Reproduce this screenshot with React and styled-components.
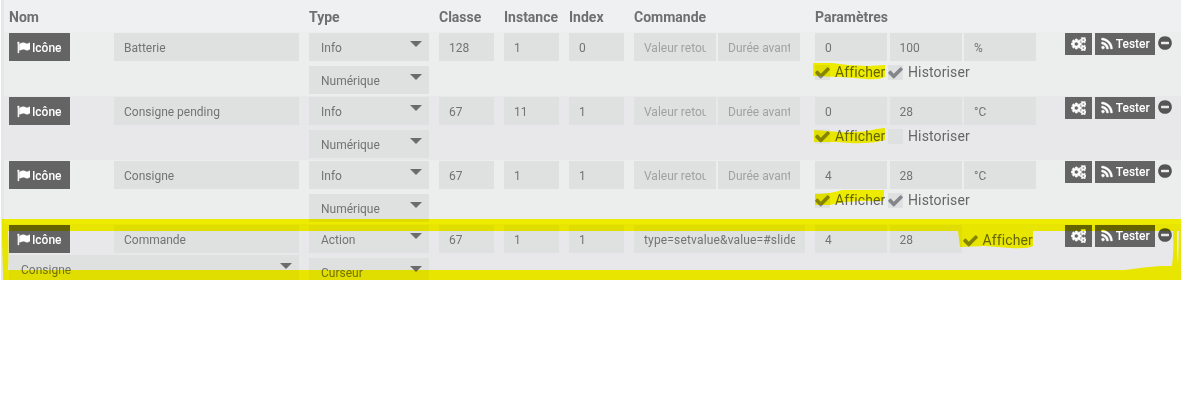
import React from "react";
import styled, { createGlobalStyle } from "styled-components";

const GlobalStyle = createGlobalStyle`
  * { box-sizing: border-box; }
  body { margin: 0; background: #fff; font-family: Roboto, "Liberation Sans", sans-serif; }
`;

const Panel = styled.main`
  position: relative;
  width: 1180px;
  height: 280px;
  margin-left: 1px;
  padding-left: 3px;
  overflow: hidden;
  background: linear-gradient(to right, #e7e7ea 3px, #eff0f2 3px);
`;

const Columns = styled.div`
  display: grid;
  grid-template-columns: 290px 120px 55px 55px 55px 171px 240px 1fr;
  column-gap: 10px;
  padding-left: 5px;
`;

const Head = styled(Columns)`
  height: 32px;
  padding-top: 8px;
  font-size: 14px;
  line-height: 18px;
  font-weight: 700;
  color: #6f6f6f;
`;

const Row = styled(Columns)`
  height: 64px;
  padding-top: 1px;
  align-items: start;
  background: ${(p) => (p.$alt ? "#e8e8ea" : "#eceeed")};
`;

const Stack = styled.div`
  display: flex;
  flex-direction: column;
  gap: ${(p) => p.$gap}px;
`;

const Line = styled.div`
  display: flex;
  align-items: flex-start;
  justify-content: ${(p) => (p.$spread ? "space-between" : "flex-start")};
  gap: ${(p) => p.$gap || 0}px;
`;

const Field = styled.div`
  flex: none;
  width: ${(p) => p.$w}px;
  height: 28px;
  padding: 1px 10px 0;
  font-size: 12px;
  line-height: 28px;
  letter-spacing: ${(p) => (p.$wide ? "0.16px" : "normal")};
  color: ${(p) => (p.$hint ? "#a0a1a1" : "#737373")};
  background: #dfe1e0;
`;

const Clip = styled.div`
  overflow: hidden;
  white-space: nowrap;
`;

const SelectBox = styled.div`
  display: flex;
  justify-content: space-between;
  width: ${(p) => p.$w}px;
  height: 28px;
  padding: 1px 7px 0 12px;
  font-size: 12px;
  line-height: 28px;
  color: #737373;
  background: #dfe1e0;
`;

const Caret = styled.i`
  width: 0;
  height: 0;
  margin-top: 7px;
  border: 6px solid transparent;
  border-top-color: #6c6c6c;
  border-bottom: 0;
`;

const Button = styled.div`
  display: flex;
  align-items: center;
  justify-content: center;
  gap: 1.5px;
  width: ${(p) => p.$w}px;
  height: ${(p) => p.$h}px;
  padding-top: ${(p) => (p.$h > 22 ? 1 : 0)}px;
  font-size: 12px;
  font-weight: 500;
  color: #fff;
  background: #646464;
`;

const Glyph = styled.svg`
  flex: none;
  height: ${(p) => p.$s}px;
  fill: currentColor;
  stroke: currentColor;
  stroke-width: ${(p) => p.$bold || 0};
`;

const Remove = styled.div`
  display: flex;
  margin: 2px 0 0 -1px;
  color: #555;
`;

const Checks = styled.div`
  display: flex;
  height: 20px;
`;

const CheckLabel = styled.div`
  display: flex;
  align-items: center;
  gap: 5px;
  width: 73px;
  margin-left: ${(p) => (p.$plain ? -1.5 : 0)}px;
  padding-top: ${(p) => p.$top || 0}px;
  font-size: 14px;
  line-height: 20px;
  letter-spacing: 0.12px;
  color: #666;
`;

const CheckBox = styled.div`
  display: flex;
  flex: none;
  align-items: center;
  justify-content: center;
  width: 15px;
  height: 15px;
  color: #85868c;
  background: ${(p) => (p.$plain ? "transparent" : "#dfe1e0")};
`;

const Marker = styled.svg`
  position: absolute;
  left: -1px;
  top: 0;
  width: 1181px;
  height: 280px;
  mix-blend-mode: multiply;
  fill: #fffc00;
`;

const PATHS = {
  flag: "M320 256q0 72-64 110v1266q0 13-9.5 22.5t-22.5 9.5h-64q-13 0-22.5-9.5t-9.5-22.5v-1266q-64-38-64-110 0-53 37.5-90.5t90.5-37.5 90.5 37.5 37.5 90.5zm1472 64v763q0 25-12.5 38.5t-39.5 27.5q-215 116-369 116-61 0-123.5-22t-108.5-48-115.5-48-142.5-22q-192 0-464 146-17 9-33 9-26 0-45-19t-19-45v-742q0-32 31-55 21-14 79-43 236-120 421-120 107 0 200 29t219 88q38 19 88 19 54 0 117.5-21t110-47 88-47 54.5-21q26 0 45 19t19 45z",
  rss: "M576 1344q0 80-56 136t-136 56-136-56-56-136 56-136 136-56 136 56 56 136zm512 123q2 28-17 48-18 21-47 21h-135q-25 0-43-16.5t-20-41.5q-22-229-184.5-391.5t-391.5-184.5q-25-2-41.5-20t-16.5-43v-135q0-29 21-47 17-17 43-17h5q160 13 306 80.5t259 181.5q114 113 181.5 259t80.5 306zm512 2q2 27-18 47-18 20-46 20h-143q-26 0-44.5-17.5t-19.5-42.5q-12-215-101-408.5t-231.5-336-336-231.5-408.5-102q-25-1-42.5-19.5t-17.5-43.5v-143q0-28 20-46 18-18 44-18h3q262 13 501.5 120t425.5 294q187 186 294 425.5t120 501.5z",
  check: "M1671 566q0 40-28 68l-724 724-136 136q-28 28-68 28t-68-28l-136-136-362-362q-28-28-28-68t28-68l136-136q28-28 68-28t68 28l294 295 656-657q28-28 68-28t68 28l136 136q28 28 28 68z",
  minus: "M1344 960v-128q0-26-19-45t-45-19h-768q-26 0-45 19t-19 45v128q0 26 19 45t45 19h768q26 0 45-19t19-45zm320-64q0 209-103 385.5t-279.5 279.5-385.5 103-385.5-103-279.5-279.5-103-385.5 103-385.5 279.5-279.5 385.5-103 385.5 103 279.5 279.5 103 385.5z",
};

const BIG_COG = "M896 896q0-106-75-181t-181-75-181 75-75 181 75 181 181 75 181-75 75-181zm384-91v185q0 10-7 19.5t-16 10.5l-155 24q-11 35-32 76 34 48 90 115 7 11 7 20 0 12-7 19-23 30-82.5 89.5t-78.5 59.5q-11 0-21-7l-115-90q-37 19-77 31-11 108-23 155-7 24-30 24h-186q-11 0-20-7.5t-10-17.5l-23-153q-34-10-75-31l-118 89q-7 7-20 7-11 0-21-8-144-133-144-160 0-9 7-19 10-14 41-53t47-61q-23-44-35-82l-152-24q-10-1-17-9.5t-7-19.5v-185q0-10 7-19.5t16-10.5l155-24q11-35 32-76-34-48-90-115-7-11-7-20 0-12 7-20 22-30 82-89t79-59q11 0 21 7l115 90q34-18 77-32 11-108 23-154 7-24 30-24h186q11 0 20 7.5t10 17.5l23 153q34 10 75 31l118-89q8-7 20-7 11 0 21 8 144 133 144 160 0 8-7 19-12 16-42 54t-45 60q23 48 34 82l152 23q10 2 17 10.5t7 19.5z";
const SMALL_COG = "M1664 1408q0-52-38-90t-90-38-90 38-38 90q0 53 37.5 90.5t90.5 37.5 90.5-37.5 37.5-90.5zM1920 1338v140q0 16-149 31-12 27-30 52 51 113 51 138 0 4-4 7-122 71-124 71-8 0-46-47t-52-68q-20 2-30 2t-30-2q-14 21-52 68t-46 47q-2 0-124-71-4-3-4-7 0-25 51-138-18-25-30-52-149-15-149-31v-140q0-16 149-31 13-29 30-52-51-113-51-138 0-4 4-7 4-2 35-20t59-34 30-16q8 0 46 46.5t52 67.5q20-2 30-2t30 2q51-71 92-112l6-2q4 0 124 70 4 3 4 7 0 25-51 138 17 23 30 52 149 15 149 31z";

const Icon = ({ name, size, bold }) => (
  <Glyph viewBox="0 0 1792 1792" $s={size} $bold={bold}><path d={PATHS[name]} /></Glyph>
);

const Cogs = () => (
  <Glyph viewBox="-40 0 2000 1792" $s={14} $bold={90} fillRule="evenodd">
    <path d={BIG_COG} />
    <path d={SMALL_COG} />
    <path d={SMALL_COG} transform="translate(0 -1024)" />
  </Glyph>
);

const Input = ({ w, hint, wide, children }) => (
  <Field $w={w} $hint={hint} $wide={wide}><Clip>{children}</Clip></Field>
);

const Select = ({ w, children }) => (
  <SelectBox $w={w}>{children}<Caret /></SelectBox>
);

const Check = ({ on, plain, top, children }) => (
  <CheckLabel $top={top} $plain={plain}>
    <CheckBox $plain={plain}>{on && <Icon name="check" size={17} />}</CheckBox>
    {children}
  </CheckLabel>
);

const ROWS = [
  { name: "Batterie", type: "Info", sub: "Numérique", cls: 128, inst: 1, index: 0, min: 0, max: 100, unit: "%", hist: true },
  { name: "Consigne pending", type: "Info", sub: "Numérique", cls: 67, inst: 11, index: 1, min: 0, max: 28, unit: "°C", hist: false },
  { name: "Consigne", type: "Info", sub: "Numérique", cls: 67, inst: 1, index: 1, min: 4, max: 28, unit: "°C", hist: true },
  { name: "Commande", type: "Action", sub: "Curseur", cls: 67, inst: 1, index: 1, min: 4, max: 28, command: "type=setvalue&value=#slide", parent: "Consigne" },
];

const HEADINGS = ["Nom", "Type", "Classe", "Instance", "Index", "Commande", "Paramètres"];

function CommandRow({ row, alt }) {
  return (
    <Row $alt={alt}>
      <Stack $gap={2}>
        <Line $spread>
          <Button $w={61} $h={28}><Icon name="flag" size={13} bold={70} />Icône</Button>
          <Input w={185}>{row.name}</Input>
        </Line>
        {row.parent && <Select w={290}>{row.parent}</Select>}
      </Stack>
      <Stack $gap={5}>
        <Select w={120}>{row.type}</Select>
        <Select w={120}>{row.sub}</Select>
      </Stack>
      <Input w={55}>{row.cls}</Input>
      <Input w={55}>{row.inst}</Input>
      <Input w={55}>{row.index}</Input>
      {row.command ? (
        <Input w={171} wide>{row.command}</Input>
      ) : (
        <Line $gap={2}>
          <Input w={82} hint>Valeur retour</Input>
          <Input w={82} hint>Durée avant</Input>
        </Line>
      )}
      <Stack $gap={1}>
        <Line $gap={2.5}>
          <Input w={72}>{row.min}</Input>
          <Input w={72}>{row.max}</Input>
          {row.unit ? <Input w={72}>{row.unit}</Input> : <Check on plain top={5}>Afficher</Check>}
        </Line>
        {row.unit && (
          <Checks>
            <Check on>Afficher</Check>
            <Check on={row.hist}>Historiser</Check>
          </Checks>
        )}
      </Stack>
      <Line $gap={3}>
        <Button $w={27} $h={22}><Cogs /></Button>
        <Button $w={60} $h={22}><Icon name="rss" size={14} bold={50} />Tester</Button>
        <Remove><Icon name="minus" size={16} /></Remove>
      </Line>
    </Row>
  );
}

export default function App() {
  return (
    <>
      <GlobalStyle />
      <Panel>
        <Head>{HEADINGS.map((h) => <span key={h}>{h}</span>)}</Head>
        {ROWS.map((row, i) => <CommandRow key={row.name} row={row} alt={i % 2 === 1} />)}
        <Marker viewBox="0 0 1181 280">
          <path d="M813 63 L832 63 Q850 66 868 66 L885 65 V77 Q878 80 866 79 L840 77 L813 76Z" />
          <path d="M814 130 L840 132 Q862 133 876 129 L885 128 V140 Q870 144 850 143 L836 142 H814Z" />
          <path d="M815 194 Q830 194 842 190 H884 V201 H858 Q840 202 830 205 H815Z" />
          <path d="M2 219 H1181 V231 H1177 V250 L1178 266 L1179 231 H1181 V280 H3 V275 L2 240Z M8 231 Q9 252 8 270 H1125 Q1145 267 1160 266 H1172 Q1174 250 1173 231Z" fillRule="evenodd" />
          <path d="M958 231 H1033 V246 Q1028 249 1010 248 L985 246 L960 247Z" />
        </Marker>
      </Panel>
    </>
  );
}
